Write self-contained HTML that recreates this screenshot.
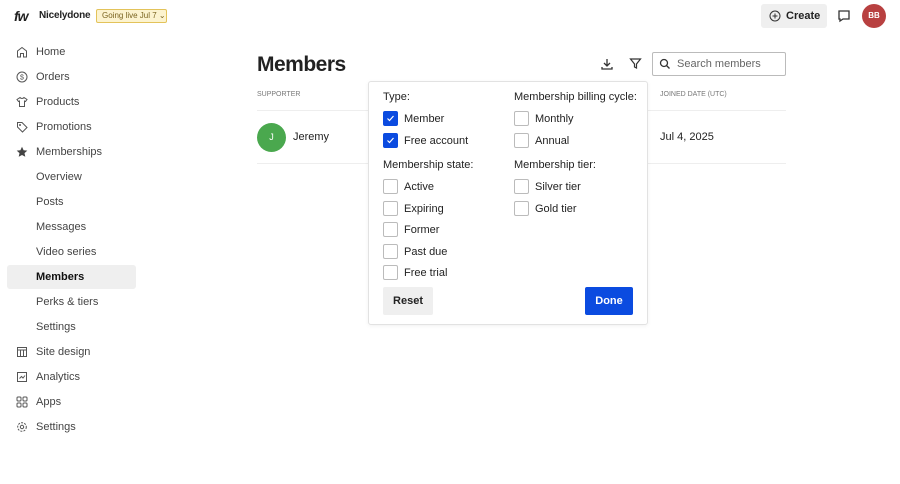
<!DOCTYPE html><html><head><style>
*{box-sizing:border-box;margin:0;padding:0}
body{width:900px;height:484px;background:#fff;font-family:"Liberation Sans",sans-serif;color:#222;position:relative;overflow:hidden;font-size:11px}
.a{position:absolute}
.nav{position:absolute;left:36px;font-size:11px;color:#444;line-height:14px}
.ic{position:absolute;left:16px;width:12px;height:12px}
.cb{position:absolute;width:15px;height:15px;border:1px solid #bbb;border-radius:2px;background:#fff}
.cb.on{background:#0b4be0;border-color:#0b4be0}
.lbl{position:absolute;font-size:11px;color:#222;line-height:14px}
</style></head><body>
<div class="a" style="left:14px;top:8px;font-size:14px;font-weight:bold;font-style:italic;letter-spacing:-1px">fw</div>
<div class="a" style="left:39px;top:10px;font-size:10px;font-weight:bold;letter-spacing:-0.2px">Nicelydone</div>
<div class="a" style="left:96px;top:9px;width:71px;height:14px;border:1px solid #e3c35a;background:#fcf3cf;border-radius:2px;font-size:8px;color:#7a6420;line-height:12px;padding-left:5px">Going live Jul 7 ⌄</div>
<div class="a" style="left:761px;top:4px;width:66px;height:24px;background:#efefef;border-radius:3px;font-size:11px;font-weight:bold;line-height:24px;padding-left:25px">Create</div>
<svg class="a" style="left:769px;top:10px" width="12" height="12" viewBox="0 0 12 12"><circle cx="6" cy="6" r="5" fill="none" stroke="#333"/><path d="M6 3.5v5M3.5 6h5" stroke="#333"/></svg>
<svg class="a" style="left:837px;top:9px" width="14" height="14" viewBox="0 0 14 14"><path d="M2 2h10v8H6l-3 2v-2H2z" fill="none" stroke="#333" stroke-width="1.3"/></svg>
<div class="a" style="left:862px;top:4px;width:24px;height:24px;border-radius:50%;background:#b84040;color:#fff;font-size:8px;font-weight:bold;text-align:center;line-height:24px">BB</div>

<div class="a" style="left:7px;top:265px;width:129px;height:24px;background:#efefef;border-radius:3px"></div>
<div class="nav" style="top:45px">Home</div>
<div class="nav" style="top:70px">Orders</div>
<div class="nav" style="top:95px">Products</div>
<div class="nav" style="top:120px">Promotions</div>
<div class="nav" style="top:145px">Memberships</div>
<div class="nav" style="top:170px">Overview</div>
<div class="nav" style="top:195px">Posts</div>
<div class="nav" style="top:220px">Messages</div>
<div class="nav" style="top:245px">Video series</div>
<div class="nav" style="top:270px;color:#111;font-weight:bold">Members</div>
<div class="nav" style="top:295px">Perks &amp; tiers</div>
<div class="nav" style="top:320px">Settings</div>
<div class="nav" style="top:345px">Site design</div>
<div class="nav" style="top:370px">Analytics</div>
<div class="nav" style="top:395px">Apps</div>
<div class="nav" style="top:420px">Settings</div>
<svg class="ic" style="top:46px" viewBox="0 0 12 12"><path d="M1.5 11V5L6 1.5 10.5 5v6H7.5V7.5h-3V11z" fill="none" stroke="#555"/></svg>
<svg class="ic" style="top:71px" viewBox="0 0 12 12"><circle cx="6" cy="6" r="5" fill="none" stroke="#555"/><text x="6" y="8.5" font-size="7" text-anchor="middle" fill="#555">$</text></svg>
<svg class="ic" style="top:96px" viewBox="0 0 12 12"><path d="M4 1.5L1 3.5l1.5 2L3.5 5v5.5h5V5l1 .5 1.5-2-3-2Q6 3.5 4 1.5z" fill="none" stroke="#555"/></svg>
<svg class="ic" style="top:121px" viewBox="0 0 12 12"><path d="M1.5 1.5h4.5l5 5-4.5 4.5-5-5z" fill="none" stroke="#555"/><circle cx="4" cy="4" r="1" fill="#555"/></svg>
<svg class="ic" style="top:146px" viewBox="0 0 12 12"><path d="M6 .8l1.6 3.4 3.7.4-2.8 2.5.8 3.7L6 9 2.7 10.8l.8-3.7L.7 4.6l3.7-.4z" fill="#444"/></svg>
<svg class="ic" style="top:346px" viewBox="0 0 12 12"><rect x="1.5" y="1.5" width="9" height="9" fill="none" stroke="#555"/><path d="M1.5 4h9M4.5 4v6.5M7.5 4v6.5" stroke="#555"/></svg>
<svg class="ic" style="top:371px" viewBox="0 0 12 12"><rect x="1.5" y="1.5" width="9" height="9" fill="none" stroke="#555"/><path d="M3.5 7.5l2-2 1.5 1.5 2-2.5" fill="none" stroke="#555"/></svg>
<svg class="ic" style="top:396px" viewBox="0 0 12 12"><g fill="none" stroke="#555"><rect x="1" y="1" width="4" height="4" rx="1"/><rect x="7" y="1" width="4" height="4" rx="1"/><rect x="1" y="7" width="4" height="4" rx="1"/><rect x="7" y="7" width="4" height="4" rx="1"/></g></svg>
<svg class="ic" style="top:421px" viewBox="0 0 12 12"><circle cx="6" cy="6" r="4.3" fill="none" stroke="#555" stroke-dasharray="2 1.2"/><circle cx="6" cy="6" r="1.7" fill="none" stroke="#555"/></svg>

<div class="a" style="left:257px;top:53px;font-size:21px;font-weight:bold;letter-spacing:-.5px">Members</div>
<svg class="a" style="left:600px;top:57px" width="14" height="14" viewBox="0 0 14 14"><path d="M7 2v7M4 6l3 3 3-3M2 10v2h10v-2" fill="none" stroke="#333" stroke-width="1.3"/></svg>
<svg class="a" style="left:629px;top:57px" width="13" height="13" viewBox="0 0 13 13"><path d="M1.5 2h10L7.5 7v4L5.5 10V7z" fill="none" stroke="#333" stroke-width="1.2"/></svg>
<div class="a" style="left:652px;top:52px;width:134px;height:24px;border:1px solid #bbb;border-radius:2px;font-size:11px;color:#666;line-height:22px;padding-left:24px">Search members</div>
<svg class="a" style="left:659px;top:58px" width="12" height="12" viewBox="0 0 12 12"><circle cx="5" cy="5" r="3.5" fill="none" stroke="#333" stroke-width="1.3"/><path d="M7.5 7.5l3 3" stroke="#333" stroke-width="1.3"/></svg>
<div class="a" style="left:257px;top:91px;font-size:7px;color:#777">SUPPORTER</div>
<div class="a" style="left:660px;top:91px;font-size:7px;color:#777">JOINED DATE (UTC)</div>
<div class="a" style="left:257px;top:110px;width:529px;height:1px;background:#eee"></div>
<div class="a" style="left:257px;top:163px;width:529px;height:1px;background:#eee"></div>
<div class="a" style="left:257px;top:123px;width:29px;height:29px;border-radius:50%;background:#4aa84e;color:#fff;font-size:9px;text-align:center;line-height:29px">J</div>
<div class="a" style="left:293px;top:131px;font-size:11px">Jeremy</div>
<div class="a" style="left:660px;top:131px;font-size:11px">Jul 4, 2025</div>

<div class="a" style="left:368px;top:81px;width:280px;height:244px;background:#fff;border:1px solid #e2e2e2;border-radius:3px;box-shadow:0 1px 4px rgba(0,0,0,.06)"></div>
<div class="lbl" style="left:383px;top:90px">Type:</div>
<div class="lbl" style="left:514px;top:90px">Membership billing cycle:</div>
<div class="lbl" style="left:383px;top:158px">Membership state:</div>
<div class="lbl" style="left:514px;top:158px">Membership tier:</div>
<div class="cb on" style="left:383px;top:111px"><svg width="13" height="13" viewBox="0 0 13 13"><path d="M3.5 6.5l2 2 4-4.5" fill="none" stroke="#fff" stroke-width="1.2"/></svg></div>
<div class="cb on" style="left:383px;top:133px"><svg width="13" height="13" viewBox="0 0 13 13"><path d="M3.5 6.5l2 2 4-4.5" fill="none" stroke="#fff" stroke-width="1.2"/></svg></div>
<div class="lbl" style="left:404px;top:112px">Member</div>
<div class="lbl" style="left:404px;top:134px">Free account</div>
<div class="cb" style="left:514px;top:111px"></div><div class="lbl" style="left:535px;top:112px">Monthly</div>
<div class="cb" style="left:514px;top:133px"></div><div class="lbl" style="left:535px;top:134px">Annual</div>
<div class="cb" style="left:383px;top:179px"></div><div class="lbl" style="left:404px;top:180px">Active</div>
<div class="cb" style="left:383px;top:201px"></div><div class="lbl" style="left:404px;top:202px">Expiring</div>
<div class="cb" style="left:383px;top:222px"></div><div class="lbl" style="left:404px;top:223px">Former</div>
<div class="cb" style="left:383px;top:244px"></div><div class="lbl" style="left:404px;top:245px">Past due</div>
<div class="cb" style="left:383px;top:265px"></div><div class="lbl" style="left:404px;top:266px">Free trial</div>
<div class="cb" style="left:514px;top:179px"></div><div class="lbl" style="left:535px;top:180px">Silver tier</div>
<div class="cb" style="left:514px;top:201px"></div><div class="lbl" style="left:535px;top:202px">Gold tier</div>
<div class="a" style="left:383px;top:287px;width:50px;height:28px;background:#efefef;border-radius:2px;font-size:11px;font-weight:bold;text-align:center;line-height:28px">Reset</div>
<div class="a" style="left:585px;top:287px;width:48px;height:28px;background:#0b4be0;border-radius:2px;color:#fff;font-size:11px;font-weight:bold;text-align:center;line-height:28px">Done</div>
</body></html>
